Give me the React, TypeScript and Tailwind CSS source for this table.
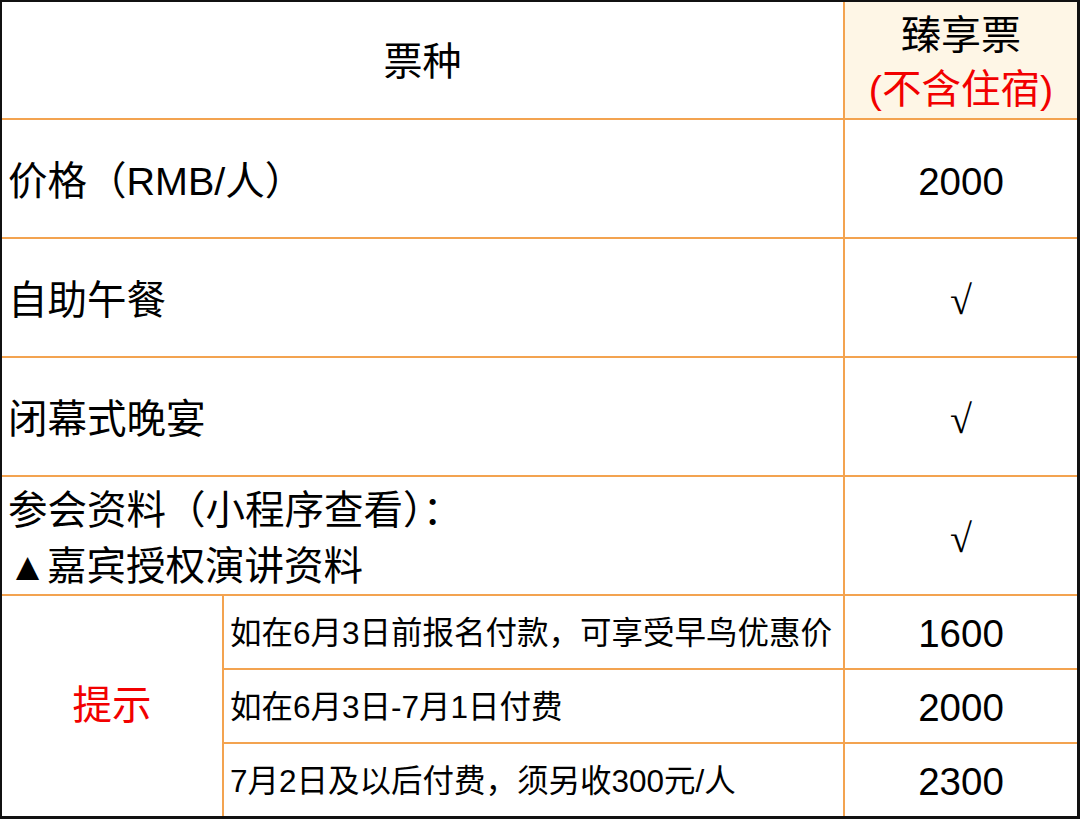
const font = "font-['Liberation_Sans','Noto_Sans_CJK_SC',sans-serif]";

const rows = [
  { label: "价格（RMB/人）", value: "2000" },
  { label: "自助午餐", value: "√" },
  { label: "闭幕式晚宴", value: "√" },
];

const tips = [
  { text: "如在6月3日前报名付款，可享受早鸟优惠价", value: "1600" },
  { text: "如在6月3日-7月1日付费", value: "2000" },
  { text: "7月2日及以后付费，须另收300元/人", value: "2300" },
];

function Check() {
  return (
    <span className="font-['Liberation_Serif',serif] text-[40px] leading-none">√</span>
  );
}

export default function App() {
  return (
    <div className={`w-[1080px] h-[819px] bg-white ${font} text-black`}>
      <div className="w-full h-full border-t-2 border-l-2 border-r-[3px] border-b-[3px] border-[#111]">
        <div className="grid grid-cols-[220px_619px_232px] grid-rows-[116px_117px_117px_117px_117px_72px_72px_72px] gap-[2px] bg-[#f3a350]">
          {/* HEADER */}
          <div className="col-span-2 bg-white flex items-center justify-center text-[39px] pt-1">
            票种
          </div>
          <div className="bg-[#fef6e6] flex flex-col items-center justify-center pt-1">
            <div className="text-[40px] leading-[54px]">臻享票</div>
            <div className="text-[39.5px] leading-[54px] text-[#f20000]">(不含住宿)</div>
          </div>

          {/* MAIN ROWS */}
          {rows.map((row) => (
            <div key={row.label} className="contents">
              <div className="col-span-2 bg-white flex items-center pl-[6px] pt-[6px] text-[39.5px]">
                {row.label}
              </div>
              <div className="bg-white flex items-center justify-center pt-[6px] text-[38.5px]">
                {row.value === "√" ? <Check /> : row.value}
              </div>
            </div>
          ))}

          <div className="col-span-2 bg-white flex flex-col justify-center pl-[6px] pt-[4px] text-[39.5px] leading-[56px]">
            <div>参会资料（小程序查看）：</div>
            <div>▲嘉宾授权演讲资料</div>
          </div>
          <div className="bg-white flex items-center justify-center pt-[6px]">
            <Check />
          </div>

          {/* TIPS */}
          <div className="row-span-3 bg-white flex items-center justify-center text-[39.5px] text-[#f20000]">
            提示
          </div>
          {tips.map((tip) => (
            <div key={tip.text} className="contents">
              <div className="bg-white flex items-center pl-[6px] pt-[4px] text-[31.5px]">
                {tip.text}
              </div>
              <div className="bg-white flex items-center justify-center pt-[3px] text-[38.5px]">
                {tip.value}
              </div>
            </div>
          ))}
        </div>
      </div>
    </div>
  );
}
